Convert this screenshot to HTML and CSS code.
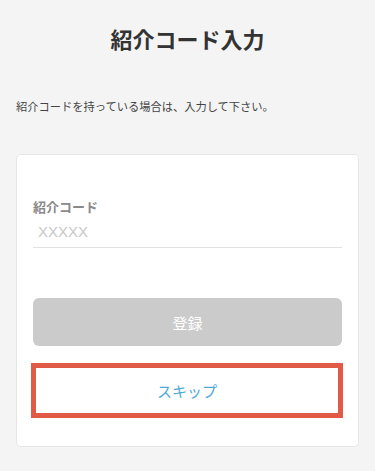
FILE: index.html
```html
<!DOCTYPE html>
<html lang="ja">
<head>
  <meta charset="UTF-8" />
  <meta name="viewport" content="width=device-width, initial-scale=1.0" />
  <title>紹介コード入力</title>
  <link rel="stylesheet" href="styles.css">
</head>
<body>
  <h1 class="title">紹介コード入力</h1>
  <p class="lead">紹介コードを持っている場合は、入力して下さい。</p>

  <!-- Form card -->
  <div class="card">
    <label class="label" for="code">紹介コード</label>
    <input class="input" id="code" type="text" placeholder="XXXXX" />
    <button class="btn btn-submit" disabled>登録</button>
    <button class="btn btn-skip">スキップ</button>
  </div>
</body>
</html>
```

FILE: styles.css
```css
/* ===== Base ===== */
* { box-sizing: border-box; margin: 0; padding: 0; }
body {
  background: #f4f4f4;
  color: #333;
  font-family: "Noto Sans CJK JP", "Noto Sans", sans-serif;
}

/* ===== Header ===== */
.title {
  margin-top: 23px;
  font-size: 22px;
  line-height: 31px;
  font-weight: bold;
  text-align: center;
  color: #333;
}
.lead {
  margin-top: 44px;
  padding-left: 16px;
  font-size: 11.25px;
  line-height: 16px;
  color: #444;
}

/* ===== Card ===== */
.card {
  margin: 40px 16px 0;
  padding: 43px 16px 28px;
  background: #fff;
  border: 1px solid #e6e6e6;
  border-radius: 5px;
  display: flex;
  flex-direction: column;
}
.label {
  font-size: 13px;
  line-height: 18px;
  font-weight: bold;
  color: #8a8a8a;
}
.input {
  height: 32px;
  border: none;
  border-bottom: 1px solid #e2e2e2;
  padding: 0 5px;
  font-family: "Liberation Sans", "Noto Sans CJK JP", sans-serif;
  font-size: 15px;
  color: #333;
  outline: none;
  background: transparent;
}
.input::placeholder { color: #c8c8c8; }

/* ===== Buttons ===== */
.btn {
  font-family: inherit;
  font-size: 15px;
  border: none;
  cursor: pointer;
}
.btn-submit {
  margin-top: 50px;
  height: 48px;
  background: #cbcbcb;
  color: #fff;
  border-radius: 6px;
}
.btn-skip {
  margin: 17px -1px 0 -2px;
  height: 55px;
  background: #fff;
  color: #4ea9d9;
  border: 5px solid #e05a45;
}
```
